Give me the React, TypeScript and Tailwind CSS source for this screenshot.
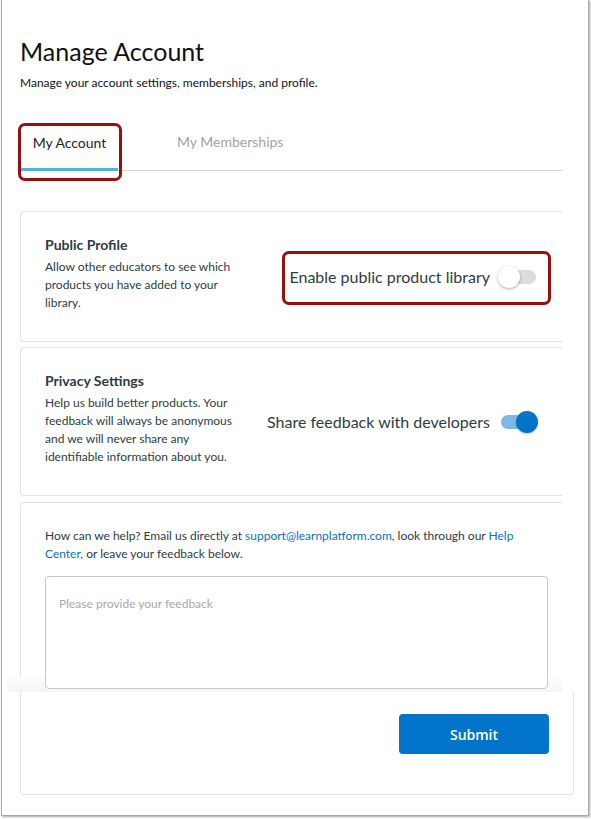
type ToggleProps = { on: boolean }

function Toggle({ on }: ToggleProps) {
  return (
    <div className="relative w-[40px] h-[22px] shrink-0">
      <div
        className={
          on
            ? 'absolute left-[3px] right-[3px] top-[4px] h-[14px] rounded-full bg-[#7db7e4]'
            : 'absolute left-[3px] right-[2px] top-[4px] h-[14px] rounded-full bg-[#dcdcdc]'
        }
      />
      <div
        className={
          on
            ? 'absolute right-0 top-0 w-[22px] h-[22px] rounded-full bg-[#0374c9] shadow-[0_1px_2px_rgba(0,0,0,0.25)]'
            : 'absolute left-0 top-0 w-[22px] h-[22px] rounded-full bg-white shadow-[0_1px_3px_rgba(0,0,0,0.35)]'
        }
      />
    </div>
  )
}

function SettingCard({
  title,
  lines,
  label,
  on,
  className,
  children,
}: {
  title: string
  lines: string[]
  label: string
  on: boolean
  className: string
  children?: React.ReactNode
}) {
  return (
    <div className={`relative border border-r-0 border-[#e3e3e3] rounded-l flex items-center pl-[24px] pr-[24px] ${className}`}>
      <div className="w-[205px] shrink-0 pb-[5px]">
        <div className="text-[14px] font-bold text-[#2d3b45] leading-[18px] mb-[4px]">{title}</div>
        {lines.map((l) => (
          <div key={l} className="text-[12px] leading-[18px] text-[#2d3b45]">
            {l}
          </div>
        ))}
      </div>
      <div className="flex-1 flex items-center justify-end gap-[8px]">
        <span className="text-[16px] text-[#2d3b45]">{label}</span>
        <Toggle on={on} />
      </div>
      {children}
    </div>
  )
}

function ManageAccount() {
  return (
    <div className="w-[591px] h-[819px] bg-white font-['Lato',sans-serif]">
      <div className="ml-[1px] w-[588px] h-[816px] border-l border-r border-b border-[#a9a9a9] shadow-[1px_1px_2px_rgba(0,0,0,0.35)] flex flex-col">
        <div className="pl-[18px] pr-[26px] flex flex-col">
          <h1 className="mt-[36px] text-[25px] leading-[30px] text-[#111] font-normal">Manage Account</h1>
          <p className="mt-[9px] text-[12px] leading-[16px] text-[#111]">
            Manage your account settings, memberships, and profile.
          </p>

          {/* tabs */}
          <div className="relative mt-[33px] flex items-end border-b border-[#d5d5d5] ml-[1px]">
            <div className="w-[97px] h-[46px] flex justify-center pt-[7px] text-[14px] text-[#222] border-b-[3px] border-[#54b1d6] -mb-[1px]">
              My Account
            </div>
            <div className="ml-[59px] h-[46px] pt-[7px] text-[14px] text-[#a3a3a3]">My Memberships</div>
            <div className="absolute left-[-3px] top-[-1px] w-[104px] h-[58px] border-[3px] border-[#990f0f] rounded-[7px]" />
          </div>

          {/* settings */}
          <SettingCard
            className="mt-[40px] h-[131px]"
            title="Public Profile"
            lines={['Allow other educators to see which', 'products you have added to your', 'library.']}
            label="Enable public product library"
            on={false}
          >
            <div className="absolute left-[261px] top-[39px] w-[269px] h-[54px] border-[3px] border-[#990f0f] rounded-[7px]" />
          </SettingCard>
          <SettingCard
            className="mt-[5px] h-[149px]"
            title="Privacy Settings"
            lines={[
              'Help us build better products. Your',
              'feedback will always be anonymous',
              'and we will never share any',
              'identifiable information about you.',
            ]}
            label="Share feedback with developers"
            on={true}
          />

          {/* feedback */}
          <div className="relative mt-[6px] border border-r-0 border-b-0 border-[#e3e3e3] rounded-tl pl-[24px] pr-[14px] pt-[24px] h-[190px]">
            <div className="absolute left-[-14px] right-0 bottom-0 h-[15px] bg-gradient-to-b from-[#fcfcfc] to-[#f5f5f5]" />
            <p className="w-[480px] text-[12px] leading-[18px] text-[#2d3b45]">
              How can we help? Email us directly at{' '}
              <span className="text-[#0770c9]">support@learnplatform.com</span>, look through our{' '}
              <span className="text-[#0770c9]">Help Center</span>, or leave your feedback below.
            </p>
            <div className="relative mt-[13px] h-[113px] bg-white border border-[#c4c8cc] rounded px-[13px] pt-[18px] text-[12px] text-[#a9a9a9]">
              Please provide your feedback
            </div>
          </div>
        </div>

        <div className="ml-[18px] mr-[14px] h-[103px] border border-t-0 border-[#e3e3e3] rounded-b flex items-start justify-end pt-[22px] pr-[24px]">
          <button className="w-[150px] h-[40px] rounded bg-[#0374cb] text-white text-[14px] font-semibold font-['Open_Sans',sans-serif]">
            Submit
          </button>
        </div>
      </div>
    </div>
  )
}

export default function App() {
  return <ManageAccount />
}
